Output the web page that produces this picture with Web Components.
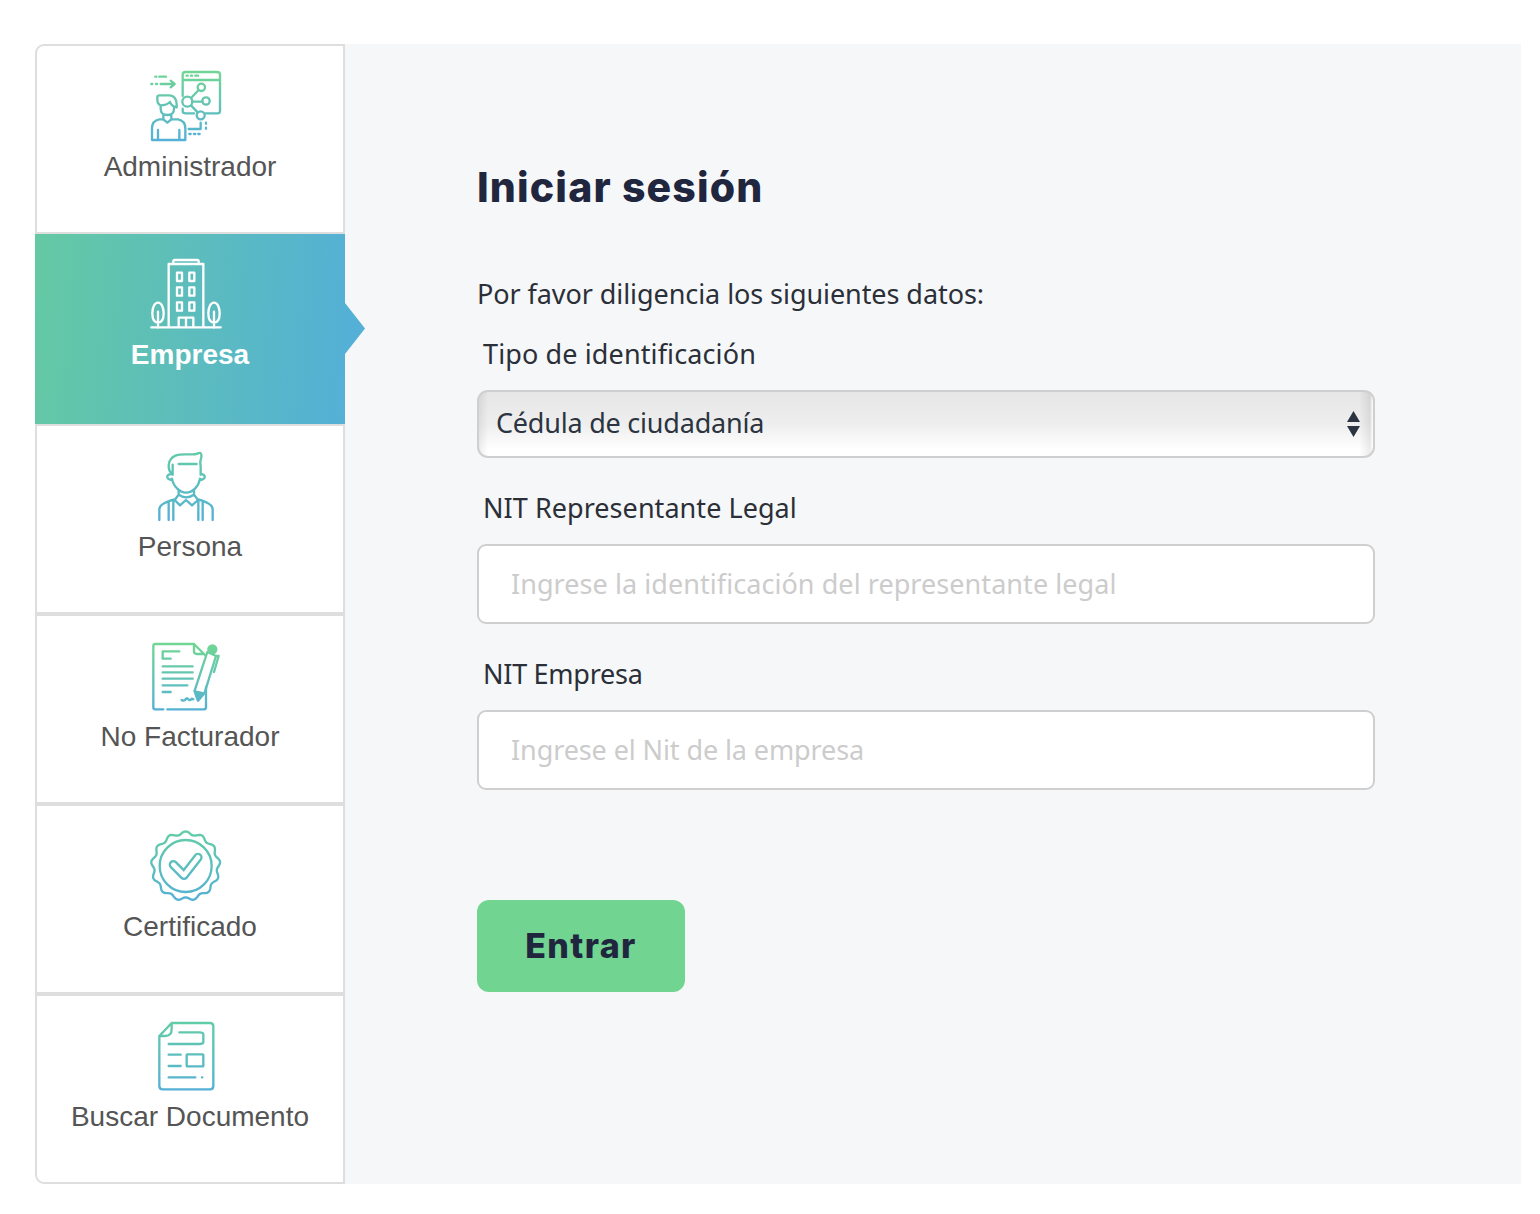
<!DOCTYPE html>
<html lang="es"><head><meta charset="utf-8"><title>Iniciar sesión</title>
<style>html,body{margin:0;background:#fff}</style></head>
<body>
<login-page>
  <side-nav slot="nav">
    <nav-tab icon="admin">Administrador</nav-tab>
    <nav-tab icon="building" active>Empresa</nav-tab>
    <nav-tab icon="person">Persona</nav-tab>
    <nav-tab icon="sign" shift>No Facturador</nav-tab>
    <nav-tab icon="cert" shift>Certificado</nav-tab>
    <nav-tab icon="doc" shift>Buscar Documento</nav-tab>
  </side-nav>
  <login-panel slot="main"></login-panel>
</login-page>
<script>
function def(name, css, html, extra){
  customElements.define(name, class extends HTMLElement{
    constructor(){super();const s=this.attachShadow({mode:'open'});s.innerHTML='<style>'+css+'</style>'+html;}
    connectedCallback(){ if(extra) extra(this); }
  });
}
def('login-page',`:host{display:flex;box-sizing:border-box;width:1540px;height:1214px;padding:44px 19px 30px 35px;align-items:stretch}`,
 `<slot name="nav"></slot><slot name="main"></slot>`);
def('side-nav',`:host{display:flex;flex-direction:column;width:310px;flex:none}`,`<slot></slot>`);

function scallop(){
  const cx=167,cy=132,n=13,R=99,a=5;let d='';
  for(let i=0;i<=360;i+=3){
    const t=i*Math.PI/180,r=R+a*Math.cos(n*t);
    d+=(i?'L':'M')+(cx+r*Math.sin(t)).toFixed(1)+' '+(cy-r*Math.cos(t)).toFixed(1);
  }
  return d+'Z';
}
const ICONS={
admin:`<path d="M158 108V44q0-8 8-8H262q8 0 8 8V152q0 8-8 8H226M192 160H168q-10 0-10-8V146M158 60H270M170 47h3M183 47h3M196 47h8"/>
<circle cx="172" cy="125" r="15"/><circle cx="214" cy="82" r="11"/><circle cx="228" cy="123" r="11"/><circle cx="212" cy="166" r="12"/>
<path d="M183 114L206 90M187 125H217M183 136L203 157M92 72H132M122 62L134 72L122 82M64 72h3M78 72h3M88 50H108M76 50h3"/>
<path d="M92 136C84 134 82 128 82 118V112Q82 106 88 106H118C132 106 140 118 140 132V142C130 140 122 134 120 126C112 134 102 136 92 136ZM92 136V146Q92 165 112 165Q132 165 132 146V140M100 165V178L112 188L124 178V165"/>
<path d="M100 178H88Q66 182 66 205V240H166V205Q166 182 144 178H124M84 210V240M148 210V240M176 207H212V188M228 188v3M228 203v3M178 222h4M192 222h4M205 222h4"/>`,
building:`<path d="M130 42V34q0-4 4-4H202q4 0 4 4V42M116 232V42H220V232M64 232H272M146 232V203H190V232M168 203V232"/>
<rect x="141" y="68" width="15" height="25"/><rect x="178" y="68" width="15" height="25"/><rect x="141" y="112" width="15" height="25"/><rect x="178" y="112" width="15" height="25"/><rect x="141" y="157" width="15" height="25"/><rect x="178" y="157" width="15" height="25"/>
<path d="M84 158C74 158 67 172 67 190C67 208 74 218 84 218C94 218 101 208 101 190C101 172 94 158 84 158ZM84 185V232M252 158C242 158 235 172 235 190C235 208 242 218 252 218C262 218 269 208 269 190C269 172 262 158 252 158ZM252 185V232"/>`,
person:`<path d="M128 104C110 88 112 58 136 47C158 38 188 48 204 40C216 34 216 50 212 60C209 68 212 72 212 80V104M128 104V74M146 72H200M124 102q-14 2-12 10q2 6 14 8M212 102q14 2 12 10q-2 6-14 8M126 116C130 140 150 158 168 158C188 158 206 140 210 116"/>
<path d="M146 152V166M192 152V166M146 164L134 180L150 196L168 180L186 196L204 180L192 164M146 164Q168 180 192 164M88 240V208Q88 190 134 178M248 240V208Q248 190 204 178M116 186V240M130 184V240M205 184V240M218 186V240"/>`,
sign:`<path d="M100 232H76q-6 0-6-6V42q0-6 6-6H192L228 72M192 36V58q0 8 8 8H222M112 232H222q6 0 6-6V165M148 58H98V80H122M98 103H188M98 121H188M98 140H188M98 160H172M98 180H122M155 204q6 4 10 0q6-8 10-2q5 6 10-2l5 2"/>
<path d="M232 60L194 176L204 206L224 182L258 72ZM258 72H266L252 120"/>
<path class="fill" d="M194 178L204 205L222 184ZM235 52a12 12 0 1 1 24 0a12 12 0 1 1-24 0Z"/>`,
cert:`<path d="${scallop()}"/><circle cx="167" cy="132" r="78"/>
<path stroke-width="28" d="M130 128L162 160L204 106"/><path class="hollow" stroke-width="14" d="M130 128L162 160L204 106"/>`,
doc:`<path d="M125 33H240q10 0 10 10V222q0 10-10 10H98q-10 0-10-10V72ZM125 33V52q0 20-20 20H88M148 61H208q12 0 12 6V90q0 6-12 6H116M116 128H152M116 162H152M116 196H196M216 196h1"/>
<rect x="170" y="127" width="50" height="36" rx="2"/>`
};
const TOP={admin:'#71d694',sign:'#71d694',person:'#62cba8',cert:'#62cba8',doc:'#62cba8',building:'#fff'};
const grad=k=>`<defs><linearGradient id="g" gradientUnits="userSpaceOnUse" x1="0" y1="35" x2="0" y2="240"><stop offset="0" stop-color="${TOP[k]}"/><stop offset="1" stop-color="#54b0d6"/></linearGradient></defs>`;

def('nav-tab',`
:host{display:flex;flex-direction:column;align-items:center;box-sizing:border-box;height:190px;background:#fff;position:relative;
 border:2px solid #dedede;padding-top:14px;font:28px/34px "Liberation Sans",Arial,sans-serif;color:#555}
:host(:first-child){border-top-left-radius:9px}
:host(:last-child){border-bottom-left-radius:9px}
:host([active]){border:0;padding-top:16px;color:#fff;font-weight:700;background:linear-gradient(95deg,#64c9a3,#54b0d6)}
:host([active])::after{content:"";position:absolute;left:100%;top:69px;width:20px;height:51px;background:#54b0d6;clip-path:polygon(0 0,100% 50%,0 100%)}
svg{display:block;width:110px;height:90px;flex:none;margin-right:10px}
:host([active]) svg{margin-bottom:-2px}
svg *{fill:none;stroke:url(#g);stroke-width:7;stroke-linecap:round;stroke-linejoin:round}
svg .fill{fill:url(#g)}
svg .hollow{stroke:#fff}
svg defs *{stroke:none}
:host([active]) svg *{stroke:#fff}
`,`<svg></svg><slot></slot>`,el=>{
  const sh=el.hasAttribute('shift');
  const svg=el.shadowRoot.querySelector('svg');
  svg.setAttribute('viewBox',sh?'0 -6 330 270':'0 0 330 270');
  const k=el.getAttribute('icon');
  svg.innerHTML=grad(k)+ICONS[k];
  svg.querySelectorAll('[stroke-width]').forEach(n=>n.style.strokeWidth=n.getAttribute('stroke-width'));
});

const UI='"Noto Sans","Open Sans",sans-serif';
def('form-label',`:host{display:block;font:27px/36px ${UI};color:#2b2f38;padding-left:6px}`,`<slot></slot>`);
def('select-box',`
:host{display:flex;align-items:center;justify-content:space-between;box-sizing:border-box;height:68px;border:2px solid #cfcfcf;border-radius:11px;
 padding:0 13px 2px 17px;font:27px/36px ${UI};letter-spacing:-.22px;color:#2b3440;
 background:linear-gradient(to right,rgba(0,0,0,.07),transparent 9px,transparent calc(100% - 14px),rgba(0,0,0,.08) calc(100% - 3px),#fff 100%),linear-gradient(#e6e6e6,#eeeeee 50%,#fff 90%)}
svg{display:block;flex:none;margin-top:2px}
`,`<slot></slot><svg width="13" height="26" viewBox="0 0 13 26"><path fill="#2b3440" d="M6.500 0L13 11H0ZM0 15H13L6.500 26Z"/></svg>`);
def('text-field',`
:host{display:block}
input{display:block;box-sizing:border-box;width:100%;height:80px;border:2px solid #cfcfcf;border-radius:9px;background:#fff;padding:0 32px 2px;font:27px ${UI};letter-spacing:var(--ls,0);color:#2b3440;outline:0}
input::placeholder{color:#cccccc;opacity:1}
`,`<input>`,el=>{el.shadowRoot.querySelector('input').placeholder=el.getAttribute('placeholder')});
def('primary-button',`
:host{display:inline-block}
button{display:block;width:208px;height:92px;border:0;border-radius:12px;background:#71d591;color:#21263f;font:800 34px Inter,sans-serif;letter-spacing:1.4px;padding:0 0 2px}
`,`<button><slot></slot></button>`);
def('login-panel',`
:host{display:block;flex:1;background:#f6f7f9;padding:116px 146px 0 132px;color:#21263f}
h1{margin:0;font:800 41px/54px Inter,sans-serif;letter-spacing:1.15px;color:#21263f}
p{margin:62px 0 0;font:27px/36px ${UI};letter-spacing:-.07px;color:#2b2f38}
form-label{margin-top:24px}
select-box{margin-top:18px}
.l1{letter-spacing:.12px}
.l2{margin-top:32px;letter-spacing:.05px}
text-field{margin-top:18px}
.l3{margin-top:32px;letter-spacing:-.27px}
primary-button{margin-top:110px}
`,`<h1>Iniciar sesión</h1>
<p>Por favor diligencia los siguientes datos:</p>
<form-label class="l1">Tipo de identificación</form-label>
<select-box>Cédula de ciudadanía</select-box>
<form-label class="l2">NIT Representante Legal</form-label>
<text-field style="--ls:.06px" placeholder="Ingrese la identificación del representante legal"></text-field>
<form-label class="l3">NIT Empresa</form-label>
<text-field style="--ls:-.1px" placeholder="Ingrese el Nit de la empresa"></text-field>
<primary-button>Entrar</primary-button>`);
</script>
</body></html>
